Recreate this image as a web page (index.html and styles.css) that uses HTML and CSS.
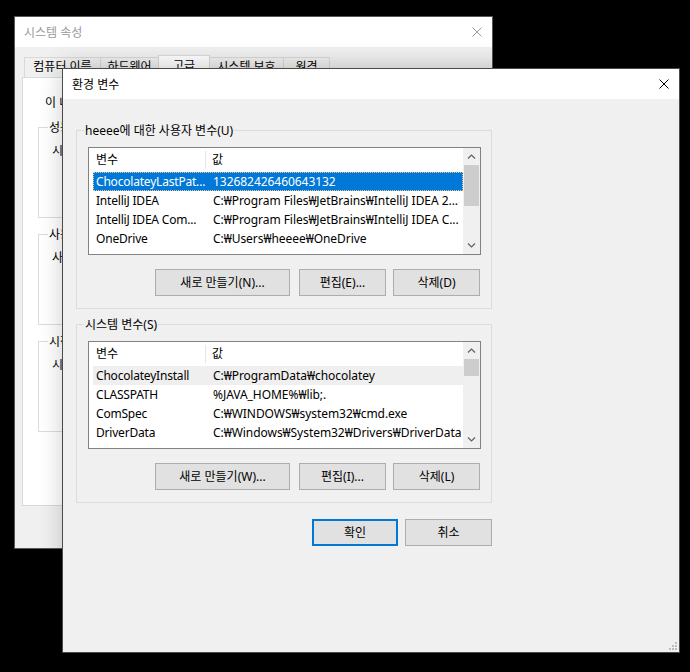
FILE: index.html
```html
<!DOCTYPE html>
<html lang="ko">
<head>
<meta charset="utf-8">
<title>환경 변수</title>
<link rel="stylesheet" href="styles.css">
</head>
<body>
<div class="desktop">

  <div class="win win-back">
    <div class="titlebar">
      <span class="title title-inactive">시스템 속성</span>
      <svg class="close" width="10" height="10" viewBox="0 0 10 10"><path d="M0.5 0.5L9.5 9.5M9.5 0.5L0.5 9.5" stroke="#9a9a9a" stroke-width="1" fill="none"/></svg>
    </div>
    <div class="back-body">
      <div class="tabs">
        <div class="tab tab-1">컴퓨터 이름</div>
        <div class="tab tab-2">하드웨어</div>
        <div class="tab tab-3 tab-sel">고급</div>
        <div class="tab tab-4">시스템 보호</div>
        <div class="tab tab-5">원격</div>
      </div>
      <div class="tabpanel">
        <p class="note">이 내용을 변경하려면 관리자로 로그온해야 합니다.</p>
        <div class="bgroup">
          <div class="blabel">성능</div>
          <p class="btext">시각 효과, 프로세서 일정, 메모리 사용 및 가상 메모리</p>
        </div>
        <div class="bgroup">
          <div class="blabel">사용자 프로필</div>
          <p class="btext">사용자 로그인에 관련된 바탕 화면 설정</p>
        </div>
        <div class="bgroup">
          <div class="blabel">시작 및 복구</div>
          <p class="btext">시스템 시작, 시스템 오류 및 디버깅 정보</p>
        </div>
      </div>
    </div>
  </div>

  <div class="win win-front">
    <div class="titlebar titlebar-front">
      <span class="title">환경 변수</span>
      <svg class="close close-front" width="10" height="10" viewBox="0 0 10 10"><path d="M0.5 0.5L9.5 9.5M9.5 0.5L0.5 9.5" stroke="#000" stroke-width="1" fill="none"/></svg>
    </div>
    <div class="front-body">

      <div class="group">
        <div class="glabel">heeee에 대한 사용자 변수(U)</div>
        <div class="list">
          <div class="list-main">
            <div class="lhead">
              <div class="hcol hcol-1">변수</div>
              <div class="hcol hcol-2">값</div>
            </div>
            <div class="row row-sel">
              <div class="c1">ChocolateyLastPat...</div>
              <div class="c2">132682426460643132</div>
            </div>
            <div class="row">
              <div class="c1">IntelliJ IDEA</div>
              <div class="c2">C:₩Program Files₩JetBrains₩IntelliJ IDEA 2...</div>
            </div>
            <div class="row">
              <div class="c1">IntelliJ IDEA Com...</div>
              <div class="c2">C:₩Program Files₩JetBrains₩IntelliJ IDEA C...</div>
            </div>
            <div class="row">
              <div class="c1">OneDrive</div>
              <div class="c2">C:₩Users₩heeee₩OneDrive</div>
            </div>
            <div class="row row-clip">
              <div class="c1">Path</div>
              <div class="c2">C:₩Users₩heeee₩AppData₩Local₩Microsoft₩WindowsApps;</div>
            </div>
          </div>
          <div class="vscroll">
            <svg class="arrow" width="9" height="17" viewBox="0 0 9 17"><path d="M1 10.5L4.5 7L8 10.5" stroke="#606060" stroke-width="1.2" fill="none"/></svg>
            <div class="thumb thumb-1"></div>
            <div class="track"></div>
            <svg class="arrow" width="9" height="17" viewBox="0 0 9 17"><path d="M1 6.5L4.5 10L8 6.5" stroke="#606060" stroke-width="1.2" fill="none"/></svg>
          </div>
        </div>
        <div class="btnrow">
          <button class="btn btn-new">새로 만들기(N)...</button>
          <button class="btn btn-edit">편집(E)...</button>
          <button class="btn btn-del">삭제(D)</button>
        </div>
      </div>

      <div class="group group-2">
        <div class="glabel">시스템 변수(S)</div>
        <div class="list">
          <div class="list-main">
            <div class="lhead">
              <div class="hcol hcol-1">변수</div>
              <div class="hcol hcol-2">값</div>
            </div>
            <div class="row row-hot">
              <div class="c1">ChocolateyInstall</div>
              <div class="c2">C:₩ProgramData₩chocolatey</div>
            </div>
            <div class="row">
              <div class="c1">CLASSPATH</div>
              <div class="c2">%JAVA_HOME%₩lib;.</div>
            </div>
            <div class="row">
              <div class="c1">ComSpec</div>
              <div class="c2">C:₩WINDOWS₩system32₩cmd.exe</div>
            </div>
            <div class="row">
              <div class="c1">DriverData</div>
              <div class="c2">C:₩Windows₩System32₩Drivers₩DriverData</div>
            </div>
            <div class="row row-clip">
              <div class="c1">JAVA_HOME</div>
              <div class="c2">C:₩Program Files₩Java₩jdk1.8.0_241</div>
            </div>
          </div>
          <div class="vscroll">
            <svg class="arrow" width="9" height="17" viewBox="0 0 9 17"><path d="M1 10.5L4.5 7L8 10.5" stroke="#606060" stroke-width="1.2" fill="none"/></svg>
            <div class="thumb thumb-2"></div>
            <div class="track"></div>
            <svg class="arrow" width="9" height="17" viewBox="0 0 9 17"><path d="M1 6.5L4.5 10L8 6.5" stroke="#606060" stroke-width="1.2" fill="none"/></svg>
          </div>
        </div>
        <div class="btnrow">
          <button class="btn btn-new">새로 만들기(W)...</button>
          <button class="btn btn-edit">편집(I)...</button>
          <button class="btn btn-del">삭제(L)</button>
        </div>
      </div>

      <div class="dlgrow">
        <button class="btn btn-ok">확인</button>
        <button class="btn btn-cancel">취소</button>
      </div>
    </div>
    <div class="grip">
      <span class="dot d1"></span>
      <span class="dot d2"></span><span class="dot d3"></span>
      <span class="dot d4"></span><span class="dot d5"></span><span class="dot d6"></span>
    </div>
  </div>

</div>
</body>
</html>
```
FILE: styles.css
```css
* { box-sizing: border-box; }

html, body {
  margin: 0;
  padding: 0;
  background: #000;
}

body {
  font-family: "Noto Sans", "Noto Sans CJK KR", sans-serif;
  font-size: 12px;
  line-height: 16px;
  color: #000;
}

.desktop {
  position: relative;
  width: 690px;
  height: 672px;
  overflow: hidden;
  background: #000;
}

.win {
  position: absolute;
  display: flex;
  flex-direction: column;
  background: #f0f0f0;
}

/* ---------- back window ---------- */
.win-back {
  left: 14px;
  top: 16px;
  width: 479px;
  height: 533px;
  border: 1px solid #575757;
  z-index: 1;
}

.titlebar {
  height: 30px;
  flex: 0 0 30px;
  background: #fff;
  display: flex;
  align-items: center;
  justify-content: space-between;
  padding: 0 9px 0 9px;
}

.title {
  line-height: 16px;
}

.title-inactive {
  color: #9a9a9a;
  margin-top: 1px;
}

.close {
  display: block;
  margin-right: 1px;
}

.back-body {
  flex: 1;
  display: flex;
  flex-direction: column;
}

.tabs {
  display: flex;
  align-items: flex-end;
  height: 30px;
  padding-left: 9px;
  position: relative;
}

.tab {
  height: 20px;
  border: 1px solid #d9d9d9;
  border-bottom: none;
  background: #f0f0f0;
  display: flex;
  align-items: center;
  justify-content: center;
  line-height: 16px;
  margin-left: -1px;
  padding-bottom: 2px;
  white-space: nowrap;
}

.tab-1 { width: 77px; margin-left: 0; }
.tab-2 { width: 59px; }
.tab-3 { width: 52px; }
.tab-4 { width: 75px; }
.tab-5 { width: 47px; }

.tab-sel {
  height: 23px;
  background: #fff;
  margin-bottom: -1px;
  padding-bottom: 3px;
  position: relative;
}

.tabpanel {
  margin: 0 7px;
  height: 429px;
  background: #fff;
  border: 1px solid #d9d9d9;
  padding: 17px 15px 0 15px;
}

.note {
  margin: 0 0 16px 7px;
  line-height: 16px;
  white-space: nowrap;
}

.bgroup {
  height: 91px;
  border: 1px solid #dcdcdc;
  margin-bottom: 16px;
  padding: 0 9px;
}

.blabel {
  width: fit-content;
  margin-top: -8px;
  background: #fff;
  padding: 0 1px;
  line-height: 16px;
}

.btext {
  margin: 7px 0 0 4px;
  line-height: 16px;
  white-space: nowrap;
}

/* ---------- front window ---------- */
.win-front {
  left: 62px;
  top: 68px;
  width: 618px;
  height: 585px;
  border: 1px solid #4a4a4a;
  box-shadow: 0 -3px 22px rgba(0, 0, 0, 0.2);
  z-index: 2;
}

.titlebar-front {
  height: 30px;
  flex: 0 0 30px;
  padding: 0 9px 0 9px;
}

.titlebar-front .title {
  margin-top: 2px;
}

.front-body {
  flex: 1;
  padding: 31px 0 0 13px;
  display: flex;
  flex-direction: column;
  align-items: flex-start;
}

.group {
  width: 416px;
  border: 1px solid #dcdcdc;
  padding: 0 10px 12px 11px;
}

.group-2 {
  margin-top: 15px;
}

.glabel {
  width: fit-content;
  margin-top: -8px;
  margin-left: -4px;
  padding: 0 1px;
  background: #f0f0f0;
  line-height: 16px;
  white-space: nowrap;
}

.list {
  margin-top: 8px;
  width: 393px;
  height: 108px;
  border: 1px solid #828282;
  background: #fff;
  display: flex;
  overflow: hidden;
}

.list-main {
  flex: 1;
  min-width: 0;
  overflow: hidden;
}

.lhead {
  height: 24px;
  display: grid;
  grid-template-columns: 117px 1fr;
  align-items: center;
}

.hcol {
  line-height: 16px;
  height: 18px;
  display: flex;
  align-items: center;
  white-space: nowrap;
}

.hcol-1 {
  padding-left: 7px;
  border-right: 1px solid #e5e5e5;
}

.hcol-2 {
  padding-left: 6px;
}

.row {
  height: 19px;
  margin-left: 4px;
  display: grid;
  grid-template-columns: 113px 1fr;
  line-height: 19px;
  white-space: nowrap;
}

.row-clip {
  padding-top: 2px;
}

.c1 {
  padding-left: 3px;
  overflow: hidden;
  letter-spacing: -0.2px;
}

.c2 {
  padding-left: 7px;
  overflow: hidden;
  letter-spacing: -0.05px;
}

.row-sel {
  background: #0078d7;
  color: #fff;
  outline: 1px dotted #f2c98a;
  outline-offset: -1px;
}

.row-hot {
  background: #efefef;
}

.vscroll {
  width: 17px;
  flex: 0 0 17px;
  background: #f0f0f0;
  display: flex;
  flex-direction: column;
  align-items: center;
}

.arrow {
  display: block;
  flex: 0 0 17px;
}

.thumb {
  width: 15px;
  background: #cdcdcd;
}

.thumb-1 { height: 41px; }
.thumb-2 { height: 17px; }

.track {
  flex: 1;
}

.btnrow {
  margin-top: 14px;
  display: flex;
  justify-content: flex-end;
  padding-right: 1px;
}

.btn {
  height: 27px;
  border: 1px solid #adadad;
  background: #e1e1e1;
  font-family: "Noto Sans", "Noto Sans CJK KR", sans-serif;
  font-size: 12px;
  line-height: 16px;
  color: #000;
  padding: 0;
  margin: 0;
  display: flex;
  align-items: center;
  justify-content: center;
  white-space: nowrap;
}

.btn-new { width: 135px; }
.btn-edit { width: 87px; margin-left: 9px; }
.btn-del { width: 87px; margin-left: 7px; }

.dlgrow {
  width: 416px;
  margin-top: 16px;
  display: flex;
  justify-content: flex-end;
}

.btn-ok {
  width: 86px;
  border: 2px solid #0078d7;
}

.btn-cancel {
  width: 87px;
  margin-left: 7px;
}

.grip {
  position: absolute;
  right: 2px;
  bottom: 2px;
  width: 9px;
  height: 9px;
}

.dot {
  position: absolute;
  width: 2px;
  height: 2px;
  background: #bcbcbc;
}

.d1 { right: 0; top: 1px; }
.d2 { right: 3px; top: 4px; }
.d3 { right: 0; top: 4px; }
.d4 { right: 6px; top: 7px; }
.d5 { right: 3px; top: 7px; }
.d6 { right: 0; top: 7px; }
```
